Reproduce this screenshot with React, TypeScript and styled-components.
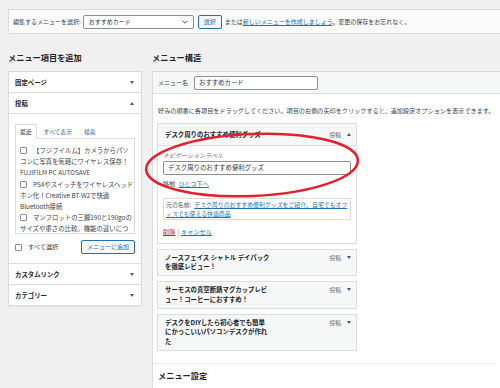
import React from 'react';
import styled, { createGlobalStyle } from 'styled-components';

const GlobalStyle = createGlobalStyle`
  html, body {
    margin: 0;
    padding: 0;
    background: #f0f0f1;
  }
  body {
    font-family: "Noto Sans CJK JP", "Noto Sans", sans-serif;
    color: #3c434a;
    overflow: hidden;
  }
  * {
    box-sizing: border-box;
  }
`;

const Page = styled.div`
  position: relative;
  width: 500px;
  height: 388px;
  overflow: hidden;
  padding: 9px 0 0 8px;
`;

const TopBar = styled.div`
  display: flex;
  align-items: center;
  height: 25px;
  padding-left: 4px;
  background: #fafafa;
  border: 1px solid #dcdcde;
  border-right: none;
  font-size: 6px;
  white-space: nowrap;
`;

const SelectBox = styled.div`
  display: flex;
  align-items: center;
  justify-content: space-between;
  width: 111px;
  height: 14px;
  margin-left: 2px;
  padding: 0 5px;
  background: #fff;
  border: 1px solid #8c8f94;
  border-radius: 2px;
  color: #2c3338;
`;

const SmallButton = styled.div<{ $width: number }>`
  display: flex;
  align-items: center;
  justify-content: center;
  width: ${(p) => p.$width}px;
  height: 14px;
  background: #f6f7f7;
  border: 1px solid #2271b1;
  border-radius: 2px;
  color: #2271b1;
  font-size: 6px;
  line-height: 10px;
`;

const Link = styled.span`
  color: #2271b1;
  text-decoration: underline;
`;

const Spaced = styled.span<{ $left: number }>`
  margin-left: ${(p) => p.$left}px;
`;

const Columns = styled.div`
  display: flex;
  gap: 10px;
  margin-top: 17px;
`;

const LeftCol = styled.div`
  flex: none;
  width: 134px;
`;

const RightCol = styled.div`
  flex: 1;
  min-width: 0;
`;

const Heading = styled.h2`
  margin: 0 0 8px;
  font-size: 8.2px;
  line-height: 12px;
  font-weight: 700;
  color: #1d2327;
`;

const Panel = styled.div`
  background: #fff;
  border: 1px solid #dcdcde;
  box-shadow: 0 1px 1px rgba(0, 0, 0, 0.04);
`;

const SectionTitle = styled.div`
  display: flex;
  align-items: center;
  justify-content: space-between;
  height: 21px;
  padding: 0 7px 0 6px;
  border-bottom: 1px solid #dcdcde;
  font-size: 6.4px;
  font-weight: 700;
  color: #1d2327;

  &:last-child {
    height: 20px;
    border-bottom: none;
  }
`;

const Arrow = styled.span<{ $up?: boolean }>`
  width: 0;
  height: 0;
  border-left: 2.5px solid transparent;
  border-right: 2.5px solid transparent;
  ${(p) =>
    p.$up
      ? 'border-bottom: 3px solid #50575e;'
      : 'border-top: 3px solid #50575e;'}
`;

const SectionBody = styled.div`
  padding: 10px 6px 9px;
  border-bottom: 1px solid #dcdcde;
`;

const Tabs = styled.div`
  display: flex;
  height: 14px;
`;

const Tab = styled.div<{ $active?: boolean }>`
  height: 15px;
  margin-right: 2px;
  margin-bottom: -1px;
  padding: 0 4px;
  line-height: 14px;
  font-size: 5.8px;
  background: ${(p) => (p.$active ? '#fff' : 'transparent')};
  border: 1px solid ${(p) => (p.$active ? '#dcdcde' : 'transparent')};
  border-bottom: none;
  color: ${(p) => (p.$active ? '#1d2327' : '#2271b1')};
  position: relative;
`;

const PostList = styled.div`
  height: 96px;
  padding: 6px 4px;
  overflow: hidden;
  border: 1px solid #dcdcde;
  font-size: 6.4px;
  line-height: 11.2px;
  white-space: nowrap;
`;

const Checkbox = styled.span`
  display: inline-block;
  flex: none;
  width: 7px;
  height: 7px;
  margin-right: 6px;
  vertical-align: -1px;
  background: #fff;
  border: 1px solid #8c8f94;
  border-radius: 1px;
`;

const SelectAllRow = styled.div`
  display: flex;
  align-items: center;
  justify-content: space-between;
  height: 14px;
  margin-top: 6px;
  font-size: 6.2px;
  line-height: 10px;
`;

const CheckLabel = styled.div`
  display: flex;
  align-items: center;
  white-space: nowrap;
`;

const MenuBox = styled.div`
  min-height: 330px;
  background: #fff;
  border: 1px solid #dcdcde;
  border-right: none;
`;

const MenuNameBar = styled.div`
  display: flex;
  align-items: center;
  height: 22px;
  padding-left: 5px;
  background: #f6f7f7;
  border-bottom: 1px solid #dcdcde;
  font-size: 6px;
  white-space: nowrap;
`;

const TextInput = styled.div<{ $width?: number }>`
  display: flex;
  align-items: center;
  width: ${(p) => (p.$width ? `${p.$width}px` : '100%')};
  height: 14px;
  padding-left: 4px;
  background: #fff;
  border: 1px solid #8c8f94;
  border-radius: 2px;
  color: #2c3338;
  font-size: 6.4px;
`;

const MenuBody = styled.div`
  padding: 12px 4px 0;
`;

const Instructions = styled.p`
  margin: 0 0 7px 1px;
  font-size: 6.15px;
  line-height: 10px;
  white-space: nowrap;
`;

const ItemList = styled.div`
  display: flex;
  flex-direction: column;
  gap: 5px;
  width: 200px;
`;

const ItemHandle = styled.div<{ $open?: boolean }>`
  display: flex;
  justify-content: space-between;
  padding: ${(p) => (p.$open ? '6px 5px 5px 7px' : '3px 5px 3px 7px')};
  background: #f6f7f7;
  border: 1px solid #dcdcde;
  ${(p) => (p.$open ? 'border-bottom: none;' : '')}
`;

const ItemTitle = styled.div`
  font-size: 6.4px;
  line-height: 9.7px;
  font-weight: 700;
  color: #1d2327;
  white-space: nowrap;
`;

const ItemControls = styled.div`
  display: flex;
  align-items: center;
  height: 9.7px;
  font-size: 5.8px;
  color: #646970;

  ${Arrow} {
    margin-left: 6px;
  }
`;

const ItemSettings = styled.div`
  padding: 5px 5px 6px;
  background: #fff;
  border: 1px solid #dcdcde;
`;

const FieldLabel = styled.div`
  font-size: 6px;
  line-height: 10px;
  font-style: italic;
  color: #646970;
`;

const TextLine = styled.div<{ $gap: number }>`
  margin-top: ${(p) => p.$gap}px;
  font-size: 6.2px;
  line-height: 10px;
`;

const MutedWord = styled.span`
  color: #50575e;
  margin-right: 3px;
`;

const OriginalBox = styled.div`
  margin-top: 9px;
  height: 22px;
  padding: 1px 2px;
  border: 1px solid #dcdcde;
  font-size: 5.9px;
  line-height: 9px;
  white-space: nowrap;
`;

const DeleteLink = styled.span`
  color: #b32d2e;
  text-decoration: underline;
`;

const Separator = styled.span`
  color: #8c8f94;
  margin: 0 2px;
`;

const SettingsDivider = styled.div`
  margin: 12px 0 0 -4px;
  padding: 5px 0 0 5px;
  border-top: 1px solid #f0f0f1;
`;

const Annotation = styled.svg`
  position: absolute;
  left: 0;
  top: 0;
  pointer-events: none;
`;

const posts = [
  ['【フジフイルム】カメラからパソ', 'コンに写真を気軽にワイヤレス保存！', 'FUJIFILM PC AUTOSAVE'],
  ['PS4やスイッチをワイヤレスヘッド', 'ホン化！Creative BT-W2で快適', 'Bluetooth接続'],
  ['マンフロットの三脚190と190goの', 'サイズや重さの比較。機能の違いにつ'],
];

const menuItems = [
  ['ノースフェイス シャトル デイパック', 'を徹底レビュー！'],
  ['サーモスの真空断熱マグカップレビ', 'ュー！コーヒーにおすすめ！'],
  ['デスクをDIYしたら初心者でも簡単', 'にかっこいいパソコンデスクが作れ', 'た'],
];

const Lines = ({ lines }: { lines: string[] }) => (
  <>
    {lines.map((l, i) => (
      <React.Fragment key={i}>
        {i > 0 && <br />}
        {l}
      </React.Fragment>
    ))}
  </>
);

const App = () => {
  return (
    <>
      <GlobalStyle />
      <Page>
        <TopBar>
          編集するメニューを選択:
          <SelectBox>
            おすすめカード
            <svg width="6" height="4" viewBox="0 0 6 4">
              <polyline points="0.6,0.8 3,3.2 5.4,0.8" fill="none" stroke="#50575e" strokeWidth="1" />
            </svg>
          </SelectBox>
          <Spaced $left={4}>
            <SmallButton $width={24}>選択</SmallButton>
          </Spaced>
          <Spaced $left={3}>
            または<Link>新しいメニューを作成しましょう</Link>。変更の保存をお忘れなく。
          </Spaced>
        </TopBar>

        <Columns>
          <LeftCol>
            <Heading>メニュー項目を追加</Heading>
            <Panel>
              <SectionTitle>
                固定ページ
                <Arrow />
              </SectionTitle>
              <SectionTitle>
                投稿
                <Arrow $up />
              </SectionTitle>
              <SectionBody>
                <Tabs>
                  <Tab $active>最近</Tab>
                  <Tab>すべて表示</Tab>
                  <Tab>検索</Tab>
                </Tabs>
                <PostList>
                  {posts.map((p, i) => (
                    <div key={i}>
                      <Checkbox />
                      <Lines lines={p} />
                    </div>
                  ))}
                </PostList>
                <SelectAllRow>
                  <CheckLabel>
                    <Checkbox />
                    すべて選択
                  </CheckLabel>
                  <SmallButton $width={54}>メニューに追加</SmallButton>
                </SelectAllRow>
              </SectionBody>
              <SectionTitle>
                カスタムリンク
                <Arrow />
              </SectionTitle>
              <SectionTitle>
                カテゴリー
                <Arrow />
              </SectionTitle>
            </Panel>
          </LeftCol>

          <RightCol>
            <Heading>メニュー構造</Heading>
            <MenuBox>
              <MenuNameBar>
                メニュー名
                <Spaced $left={6}>
                  <TextInput $width={124}>おすすめカード</TextInput>
                </Spaced>
              </MenuNameBar>
              <MenuBody>
                <Instructions>
                  好みの順番に各項目をドラッグしてください。項目の右側の矢印をクリックすると、追加設定オプションを表示できます。
                </Instructions>
                <ItemList>
                  <div>
                    <ItemHandle $open>
                      <ItemTitle>デスク周りのおすすめ便利グッズ</ItemTitle>
                      <ItemControls>
                        投稿
                        <Arrow $up />
                      </ItemControls>
                    </ItemHandle>
                    <ItemSettings>
                      <FieldLabel>ナビゲーションラベル</FieldLabel>
                      <TextInput>デスク周りのおすすめ便利グッズ</TextInput>
                      <TextLine $gap={4}>
                        <MutedWord>移動</MutedWord>
                        <Link>ひとつ下へ</Link>
                      </TextLine>
                      <OriginalBox>
                        <MutedWord>元の名前:</MutedWord>
                        <Link>デスク周りのおすすめ便利グッズをご紹介。自宅でもオフ</Link>
                        <br />
                        <Link>ィスでも使える快適商品</Link>
                      </OriginalBox>
                      <TextLine $gap={7}>
                        <DeleteLink>削除</DeleteLink>
                        <Separator>|</Separator>
                        <Link>キャンセル</Link>
                      </TextLine>
                    </ItemSettings>
                  </div>
                  {menuItems.map((m, i) => (
                    <ItemHandle key={i}>
                      <ItemTitle>
                        <Lines lines={m} />
                      </ItemTitle>
                      <ItemControls>
                        投稿
                        <Arrow />
                      </ItemControls>
                    </ItemHandle>
                  ))}
                </ItemList>
                <SettingsDivider>
                  <Heading>メニュー設定</Heading>
                </SettingsDivider>
              </MenuBody>
            </MenuBox>
          </RightCol>
        </Columns>

        <Annotation width="500" height="388" viewBox="0 0 500 388">
          <ellipse
            cx="252"
            cy="165"
            rx="106"
            ry="31"
            fill="none"
            stroke="#e0212e"
            strokeWidth="2.5"
            transform="rotate(-2.5 252 165)"
          />
        </Annotation>
      </Page>
    </>
  );
};

export default App;
